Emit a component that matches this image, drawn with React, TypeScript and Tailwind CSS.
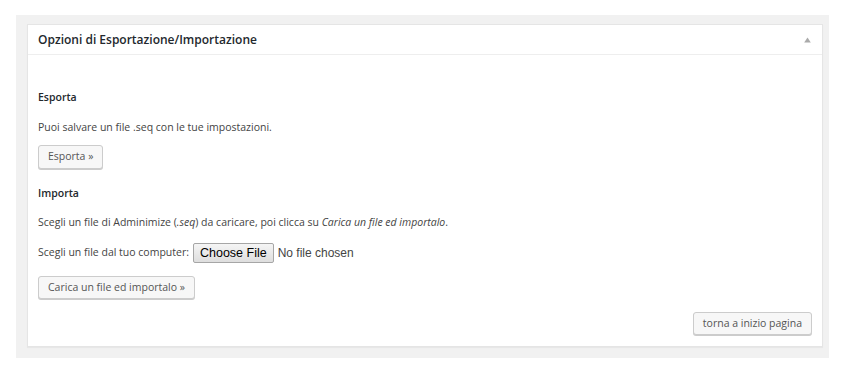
export default function App() {
  const btn =
    "inline-flex items-center rounded-[3px] border border-[#cccccc] bg-[#f7f7f7] px-[9px] text-[10.5px] text-[#555555] shadow-[0_1px_0_#cccccc]";
  return (
    <div className="h-[374px] w-[845px] bg-white pt-[15px] pl-[16px] font-['Open_Sans',sans-serif] text-[#444444]">
      <div className="h-[343px] w-[813px] bg-[#f1f1f1] pt-[9px] pl-[11px]">
        <div className="flex h-[323px] w-[796px] flex-col border border-[#e5e5e5] bg-white shadow-[0_1px_1px_rgba(0,0,0,0.04)]">
          <div className="flex h-[30px] shrink-0 items-center justify-between border-b border-[#eeeeee] pl-[10px] pr-[10px]">
            <h2 className="text-[12px] font-semibold text-[#23282d]">Opzioni di Esportazione/Importazione</h2>
            <svg width="7" height="6" viewBox="0 0 7 6" className="mr-[1px]">
              <path d="M3.5 0.5 L6.8 5.5 L0.2 5.5 Z" fill="#aaaaaa" />
            </svg>
          </div>
          <div className="flex flex-1 flex-col px-[10px] text-[10.5px]">
            <h3 className="mt-[34px] h-[16px] leading-[16px] font-semibold text-[#23282d]">Esporta</h3>
            <p className="mt-[14px] h-[16px] leading-[16px]">Puoi salvare un file .seq con le tue impostazioni.</p>
            <div className="mt-[10px]">
              <button className={`${btn} h-[24px]`}>Esporta »</button>
            </div>
            <h3 className="mt-[16px] h-[16px] leading-[16px] font-semibold text-[#23282d]">Importa</h3>
            <p className="mt-[13px] h-[16px] leading-[16px]">
              Scegli un file di Adminimize (<em>.seq</em>) da caricare, poi clicca su <em>Carica un file ed importalo</em>.
            </p>
            <div className="mt-[13px] flex h-[20px] items-center">
              <span>Scegli un file dal tuo computer:</span>
              <button className="ml-[4px] h-[20px] rounded-[2px] border border-[#a6a6a6] bg-gradient-to-b from-[#f5f5f5] to-[#dedede] px-[6px] font-['Liberation_Sans',sans-serif] text-[12.5px] leading-[18px] text-black">
                Choose File
              </button>
              <span className="ml-[4px] font-['Liberation_Sans',sans-serif] text-[12px] text-[#444444]">No file chosen</span>
            </div>
            <div className="mt-[13px]">
              <button className={`${btn} h-[23px]`}>Carica un file ed importalo »</button>
            </div>
            <div className="mt-[13px] flex justify-end">
              <button className={`${btn} h-[23px]`}>torna a inizio pagina</button>
            </div>
          </div>
        </div>
      </div>
    </div>
  );
}
